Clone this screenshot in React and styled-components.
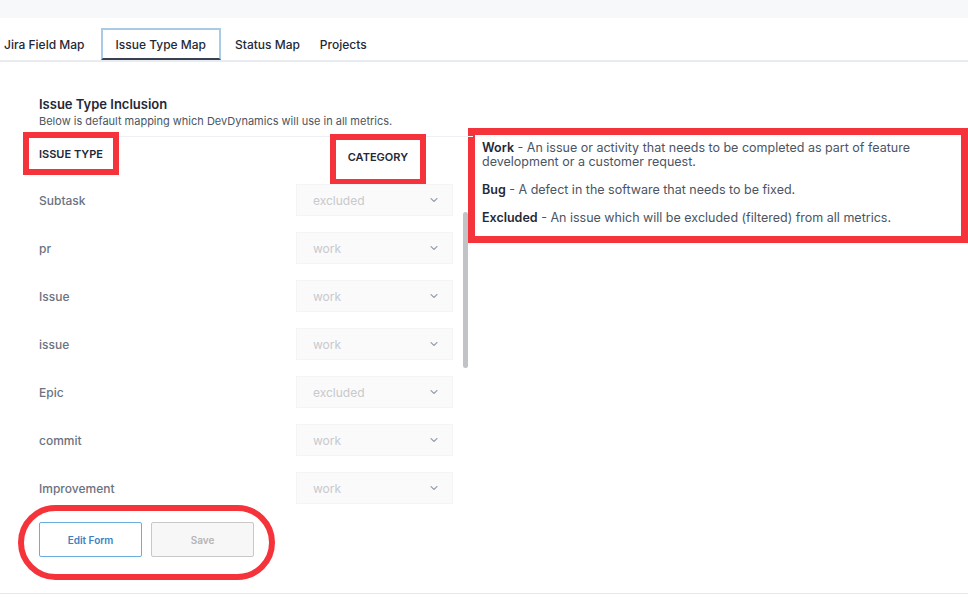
import React from 'react';
import styled, { createGlobalStyle } from 'styled-components';

const ROWS = [
  ['Subtask', 'excluded'],
  ['pr', 'work'],
  ['Issue', 'work'],
  ['issue', 'work'],
  ['Epic', 'excluded'],
  ['commit', 'work'],
  ['Improvement', 'work'],
];

const Global = createGlobalStyle`
  body { margin: 0; font-family: Inter, "Noto Sans", sans-serif; background: #fff; overflow: hidden; }
`;

const Page = styled.div`
  width: 968px;
  height: 599px;
  position: relative;
  overflow: hidden;
`;

const TopStrip = styled.div`
  height: 18px;
  background: #f7f8fa;
`;

const Tabs = styled.div`
  display: flex;
  align-items: stretch;
  height: 32px;
  margin-top: 10px;
  border-bottom: 2px solid #e8ecf1;
  padding-left: 0;
`;

const Tab = styled.div`
  display: flex;
  align-items: center;
  padding: 0 ${p => (p.$active ? 13 : 10)}px;
  font-size: 12px;
  font-weight: 500;
  color: #1f2937;
  ${p => p.$active && `
    border: 2px solid #a9cbe6;
    border-bottom: 2px solid #374151;
    margin: 0 4px;
  `}
  &:first-child { padding-left: 4px; padding-right: 12px; }
`;

const Body = styled.div`
  display: flex;
  padding-top: 34px;
`;

const Left = styled.div`
  width: 442px;
  padding-left: 39px;
  position: relative;
`;

const Title = styled.div`
  font-size: 13px;
  font-weight: 600;
  color: #1f2937;
`;

const Sub = styled.div`
  font-size: 11px;
  color: #4b5563;
  margin-top: 2px;
  padding-bottom: 8px;
  border-bottom: 1px solid #eef0f3;
`;

const Head = styled.div`
  display: flex;
  justify-content: space-between;
  align-items: flex-start;
  margin-top: -5px;
  padding-right: 47px;
  height: 44px;
`;

const Marked = styled.div`
  border: 6px solid #f5333b;
  padding: ${p => p.$pad};
  margin-left: ${p => p.$ml || 0}px;
  margin-top: ${p => p.$mt || 0}px;
  font-size: 11px;
  font-weight: 600;
  color: #1f2937;
  background: #fff;
`;

const List = styled.div`
  display: flex;
  flex-direction: column;
`;

const Row = styled.div`
  display: flex;
  align-items: center;
  justify-content: space-between;
  height: 48px;
  padding-right: 20px;
`;

const Name = styled.span`
  font-size: 12px;
  font-weight: 500;
  color: #6b7280;
`;

const Select = styled.div`
  width: 157px;
  height: 32px;
  box-sizing: border-box;
  border: 1px solid #f3f4f6;
  background: #fafafa;
  display: flex;
  align-items: center;
  justify-content: space-between;
  padding: 0 12px 0 16px;
  font-size: 12px;
  color: #c7c9cd;
`;

const Scroll = styled.div`
  position: absolute;
  left: 463px;
  top: 116px;
  width: 5px;
  height: 156px;
  border-radius: 3px;
  background: #c1c3c6;
`;

const Buttons = styled.div`
  display: flex;
  gap: 9px;
  margin-top: 10px;
`;

const Btn = styled.button`
  width: 103px;
  height: 35px;
  font-family: inherit;
  font-size: 10px;
  font-weight: 600;
  background: ${p => (p.$primary ? '#fff' : '#f7f7f7')};
  color: ${p => (p.$primary ? '#3b82c4' : '#b5b5b5')};
  border: 1px solid ${p => (p.$primary ? '#6aaee0' : '#c8c8c8')};
  border-radius: 2px;
`;

const Oval = styled.div`
  position: absolute;
  left: 18px;
  top: 409px;
  width: 245px;
  height: 63px;
  border: 6px solid #f5333b;
  border-radius: 40px;
`;

const Legend = styled.div`
  margin-top: 32px;
  margin-left: -5px;
  width: 500px;
  height: 115px;
  flex-shrink: 0;
  border: 7px solid #f5333b;
  padding: 6px 0 0 7px;
  box-sizing: border-box;
  font-size: 12.5px;
  color: #4b5563;
  line-height: 14px;
`;

const Para = styled.p`
  margin: 0 0 ${p => p.$gap}px;
  b { color: #1f2937; font-weight: 600; }
`;

const Footer = styled.div`
  position: absolute;
  left: 0;
  right: 0;
  top: 593px;
  border-top: 1px solid #e5e7eb;
`;

const Chevron = () => (
  <svg width="12" height="12" viewBox="0 0 24 24" fill="none" stroke="#9ca3af" strokeWidth="2.2" strokeLinecap="round" strokeLinejoin="round">
    <path d="M6 9l6 6 6-6" />
  </svg>
);

export default function App() {
  return (
    <Page>
      <Global />
      <TopStrip />
      <Tabs>
        <Tab>Jira Field Map</Tab>
        <Tab $active>Issue Type Map</Tab>
        <Tab>Status Map</Tab>
        <Tab>Projects</Tab>
      </Tabs>
      <Body>
        <Left>
          <Title>Issue Type Inclusion</Title>
          <Sub>Below is default mapping which DevDynamics will use in all metrics.</Sub>
          <Head>
            <Marked $pad="9px 10px 8px" $ml={-16}>ISSUE TYPE</Marked>
            <Marked $pad="10px 12px 15px" $mt={2}>CATEGORY</Marked>
          </Head>
          <List>
            {ROWS.map(([n, c]) => (
              <Row key={n}>
                <Name>{n}</Name>
                <Select>{c}<Chevron /></Select>
              </Row>
            ))}
          </List>
          <Buttons>
            <Btn $primary>Edit Form</Btn>
            <Btn>Save</Btn>
          </Buttons>
          <Scroll />
          <Oval />
        </Left>
        <Legend>
          <Para $gap={14}><b>Work</b> - An issue or activity that needs to be completed as part of feature development or a customer request.</Para>
          <Para $gap={14}><b>Bug</b> - A defect in the software that needs to be fixed.</Para>
          <Para $gap={0}><b>Excluded</b> - An issue which will be excluded (filtered) from all metrics.</Para>
        </Legend>
      </Body>
      <Footer />
    </Page>
  );
}
